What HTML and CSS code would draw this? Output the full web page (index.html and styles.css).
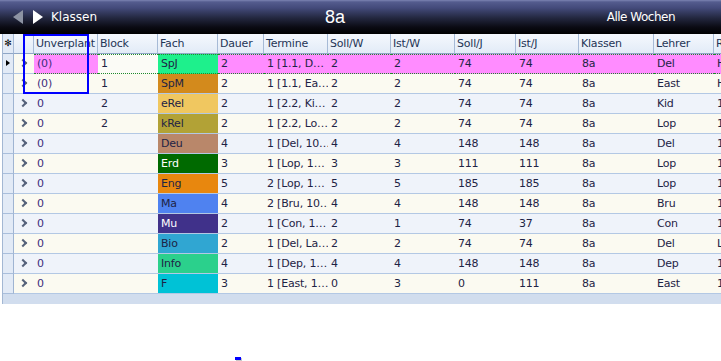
FILE: index.html
```html
<!DOCTYPE html>
<html lang="de">
<head>
  <meta charset="UTF-8" />
  <title>Klassen - 8a</title>
  <link rel="stylesheet" href="styles.css">
</head>
<body>
  <div class="topbar">
    <div class="nav">
      <svg class="arrow" width="10" height="14" viewBox="0 0 10 14"><polygon points="10,0 10,14 0,7" fill="#8d93a3"/></svg>
      <svg class="arrow" width="10" height="14" viewBox="0 0 10 14"><polygon points="0,0 0,14 10,7" fill="#ffffff"/></svg>
      <span class="nav-label">Klassen</span>
    </div>
    <div class="title">8a</div>
    <div class="weeks">Alle Wochen</div>
  </div>

  <div class="grid">
    <div class="row head">
      <div class="c rh">&#x273B;</div>
      <div class="c"></div>
      <div class="c">Unverplant</div>
      <div class="c">Block</div>
      <div class="c">Fach</div>
      <div class="c">Dauer</div>
      <div class="c">Termine</div>
      <div class="c">Soll/W</div>
      <div class="c">Ist/W</div>
      <div class="c">Soll/J</div>
      <div class="c">Ist/J</div>
      <div class="c">Klassen</div>
      <div class="c">Lehrer</div>
      <div class="c">R</div>
    </div>

    <div class="row sel">
      <div class="c rh"><span class="cur"></span></div>
      <div class="c ex"><span class="chev"></span></div>
      <div class="c unv focus">(0)</div>
      <div class="c plain focus">1</div>
      <div class="c f-spj">SpJ</div>
      <div class="c">2</div>
      <div class="c">1 [1.1, D…</div>
      <div class="c">2</div>
      <div class="c">2</div>
      <div class="c">74</div>
      <div class="c">74</div>
      <div class="c">8a</div>
      <div class="c">Del</div>
      <div class="c">H</div>
    </div>
    <div class="row">
      <div class="c rh"></div>
      <div class="c ex"><span class="chev"></span></div>
      <div class="c unv">(0)</div>
      <div class="c">1</div>
      <div class="c f-spm">SpM</div>
      <div class="c">2</div>
      <div class="c">1 [1.1, Ea…</div>
      <div class="c">2</div>
      <div class="c">2</div>
      <div class="c">74</div>
      <div class="c">74</div>
      <div class="c">8a</div>
      <div class="c">East</div>
      <div class="c">H</div>
    </div>
    <div class="row alt">
      <div class="c rh"></div>
      <div class="c ex"><span class="chev"></span></div>
      <div class="c unv">0</div>
      <div class="c">2</div>
      <div class="c f-erel">eRel</div>
      <div class="c">2</div>
      <div class="c">1 [2.2, Ki…</div>
      <div class="c">2</div>
      <div class="c">2</div>
      <div class="c">74</div>
      <div class="c">74</div>
      <div class="c">8a</div>
      <div class="c">Kid</div>
      <div class="c">1</div>
    </div>
    <div class="row">
      <div class="c rh"></div>
      <div class="c ex"><span class="chev"></span></div>
      <div class="c unv">0</div>
      <div class="c">2</div>
      <div class="c f-krel">kRel</div>
      <div class="c">2</div>
      <div class="c">1 [2.2, Lo…</div>
      <div class="c">2</div>
      <div class="c">2</div>
      <div class="c">74</div>
      <div class="c">74</div>
      <div class="c">8a</div>
      <div class="c">Lop</div>
      <div class="c">1</div>
    </div>
    <div class="row alt">
      <div class="c rh"></div>
      <div class="c ex"><span class="chev"></span></div>
      <div class="c unv">0</div>
      <div class="c"></div>
      <div class="c f-deu">Deu</div>
      <div class="c">4</div>
      <div class="c">1 [Del, 10…</div>
      <div class="c">4</div>
      <div class="c">4</div>
      <div class="c">148</div>
      <div class="c">148</div>
      <div class="c">8a</div>
      <div class="c">Del</div>
      <div class="c">1</div>
    </div>
    <div class="row">
      <div class="c rh"></div>
      <div class="c ex"><span class="chev"></span></div>
      <div class="c unv">0</div>
      <div class="c"></div>
      <div class="c f-erd">Erd</div>
      <div class="c">3</div>
      <div class="c">1 [Lop, 1…</div>
      <div class="c">3</div>
      <div class="c">3</div>
      <div class="c">111</div>
      <div class="c">111</div>
      <div class="c">8a</div>
      <div class="c">Lop</div>
      <div class="c">1</div>
    </div>
    <div class="row alt">
      <div class="c rh"></div>
      <div class="c ex"><span class="chev"></span></div>
      <div class="c unv">0</div>
      <div class="c"></div>
      <div class="c f-eng">Eng</div>
      <div class="c">5</div>
      <div class="c">2 [Lop, 1…</div>
      <div class="c">5</div>
      <div class="c">5</div>
      <div class="c">185</div>
      <div class="c">185</div>
      <div class="c">8a</div>
      <div class="c">Lop</div>
      <div class="c">1</div>
    </div>
    <div class="row">
      <div class="c rh"></div>
      <div class="c ex"><span class="chev"></span></div>
      <div class="c unv">0</div>
      <div class="c"></div>
      <div class="c f-ma">Ma</div>
      <div class="c">4</div>
      <div class="c">2 [Bru, 10…</div>
      <div class="c">4</div>
      <div class="c">4</div>
      <div class="c">148</div>
      <div class="c">148</div>
      <div class="c">8a</div>
      <div class="c">Bru</div>
      <div class="c">1</div>
    </div>
    <div class="row alt">
      <div class="c rh"></div>
      <div class="c ex"><span class="chev"></span></div>
      <div class="c unv">0</div>
      <div class="c"></div>
      <div class="c f-mu">Mu</div>
      <div class="c">2</div>
      <div class="c">1 [Con, 1…</div>
      <div class="c">2</div>
      <div class="c">1</div>
      <div class="c">74</div>
      <div class="c">37</div>
      <div class="c">8a</div>
      <div class="c">Con</div>
      <div class="c">1</div>
    </div>
    <div class="row">
      <div class="c rh"></div>
      <div class="c ex"><span class="chev"></span></div>
      <div class="c unv">0</div>
      <div class="c"></div>
      <div class="c f-bio">Bio</div>
      <div class="c">2</div>
      <div class="c">1 [Del, La…</div>
      <div class="c">2</div>
      <div class="c">2</div>
      <div class="c">74</div>
      <div class="c">74</div>
      <div class="c">8a</div>
      <div class="c">Del</div>
      <div class="c">L</div>
    </div>
    <div class="row alt">
      <div class="c rh"></div>
      <div class="c ex"><span class="chev"></span></div>
      <div class="c unv">0</div>
      <div class="c"></div>
      <div class="c f-info">Info</div>
      <div class="c">4</div>
      <div class="c">1 [Dep, 1…</div>
      <div class="c">4</div>
      <div class="c">4</div>
      <div class="c">148</div>
      <div class="c">148</div>
      <div class="c">8a</div>
      <div class="c">Dep</div>
      <div class="c">1</div>
    </div>
    <div class="row">
      <div class="c rh"></div>
      <div class="c ex"><span class="chev"></span></div>
      <div class="c unv">0</div>
      <div class="c"></div>
      <div class="c f-f">F</div>
      <div class="c">3</div>
      <div class="c">1 [East, 1…</div>
      <div class="c">0</div>
      <div class="c">3</div>
      <div class="c">0</div>
      <div class="c">111</div>
      <div class="c">8a</div>
      <div class="c">East</div>
      <div class="c">1</div>
    </div>

    <div class="footer-band"></div>
  </div>

  <!-- overlays -->
  <div class="selection-box"></div>
  <div class="marker"></div>
</body>
</html>
```

FILE: styles.css
```css
* {
  box-sizing: border-box;
}

body {
  margin: 0;
  width: 721px;
  height: 361px;
  overflow: hidden;
  background: #ffffff;
  font-family: "DejaVu Sans", sans-serif;
  font-size: 11px;
  color: #1e2345;
  position: relative;
}

/* top bar */
.topbar {
  height: 34px;
  display: grid;
  grid-template-columns: 325px auto 1fr;
  align-items: center;
  color: #ffffff;
  background: linear-gradient(#7c84b2 0, #545c8e 2px, #434a7a 8px, #23273f 18px, #0b0b14 27px, #000000 34px);
}

.nav {
  display: flex;
  align-items: center;
  padding-left: 13px;
}

.arrow {
  display: block;
  margin-right: 10px;
}

.nav-label {
  font-size: 12px;
  margin-left: -2px;
}

.title {
  font-family: "Liberation Sans", sans-serif;
  font-size: 18px;
}

.weeks {
  justify-self: end;
  padding-right: 46px;
  font-size: 12px;
  letter-spacing: -0.5px;
}

/* grid */
.grid {
  margin-left: 2px;
  border-left: 1px solid #a3b7d3;
  overflow: hidden;
  letter-spacing: -0.2px;
}

.row {
  display: grid;
  grid-template-columns: 11px 20px 64px 60px 60px 46px 64px 63px 64px 61px 63px 75px 60px 66px;
  height: 20px;
  background: #fbfaf1;
}

.row.alt {
  background: #eff3fa;
}

.c {
  height: 20px;
  line-height: 19px;
  padding-left: 3px;
  white-space: nowrap;
  overflow: hidden;
  border-bottom: 1px solid #b3c8e4;
}

.head .c {
  padding-left: 2px;
  color: #1f3556;
  background: linear-gradient(#f5f8fd, #e2ebf7);
  border-right: 1px solid #a6bad6;
  border-bottom: 1px solid #8fa6c6;
}

.head .rh {
  padding-left: 0;
  text-align: center;
  font-size: 9px;
  color: #000000;
}

.rh {
  padding-left: 0;
  background: #e2eaf6;
  border-right: 1px solid #9fb4d2;
  border-bottom-color: #a9bedb;
}

.row .rh {
  background: #e2eaf6;
}

.cur {
  display: block;
  width: 0;
  height: 0;
  margin: 6px 0 0 3px;
  border-top: 3.5px solid transparent;
  border-bottom: 3.5px solid transparent;
  border-left: 4px solid #000000;
}

.ex {
  padding-left: 6px;
}

.chev {
  display: block;
  width: 6px;
  height: 6px;
  margin-top: 6px;
  border-top: 2px solid #56627a;
  border-right: 2px solid #56627a;
  transform: rotate(45deg);
}

.unv {
  color: #3d2c7c;
}

/* selected row */
.sel {
  background: #ff8cff;
}

.sel .c:not(.rh):not(.ex) {
  border-top: 1px dotted #1f8a2a;
  border-bottom: 1px dotted #1f8a2a;
  line-height: 17px;
}

.sel .focus {
  border-top-color: #333333;
  border-bottom-color: #333333;
}

.sel .plain {
  background: #fbfbf6;
}

.sel .ex {
  background: #fbfaf1;
}

/* subject colours */
.f-spj { background: #1ef08c; }
.f-spm { background: #d38a1c; }
.f-erel { background: #f0c760; }
.f-krel { background: #b2a236; }
.f-deu { background: #b9876a; }
.f-erd { background: #006a00; color: #ffffff; }
.f-eng { background: #e8870e; }
.f-ma { background: #4f82f0; }
.f-mu { background: #40318a; color: #ffffff; }
.f-bio { background: #30a6d2; }
.f-info { background: #2bd08c; }
.f-f { background: #00c2d6; }

.footer-band {
  height: 10px;
  background: #d1ddee;
}

/* overlays */
.selection-box {
  position: absolute;
  left: 23px;
  top: 34px;
  width: 66px;
  height: 60px;
  border: 2px solid #0000ff;
}

.marker {
  position: absolute;
  left: 235px;
  top: 357px;
  width: 6px;
  height: 3px;
  background: #0000ff;
  box-shadow: 1px 1px 0 #c8c8c8;
}
```
